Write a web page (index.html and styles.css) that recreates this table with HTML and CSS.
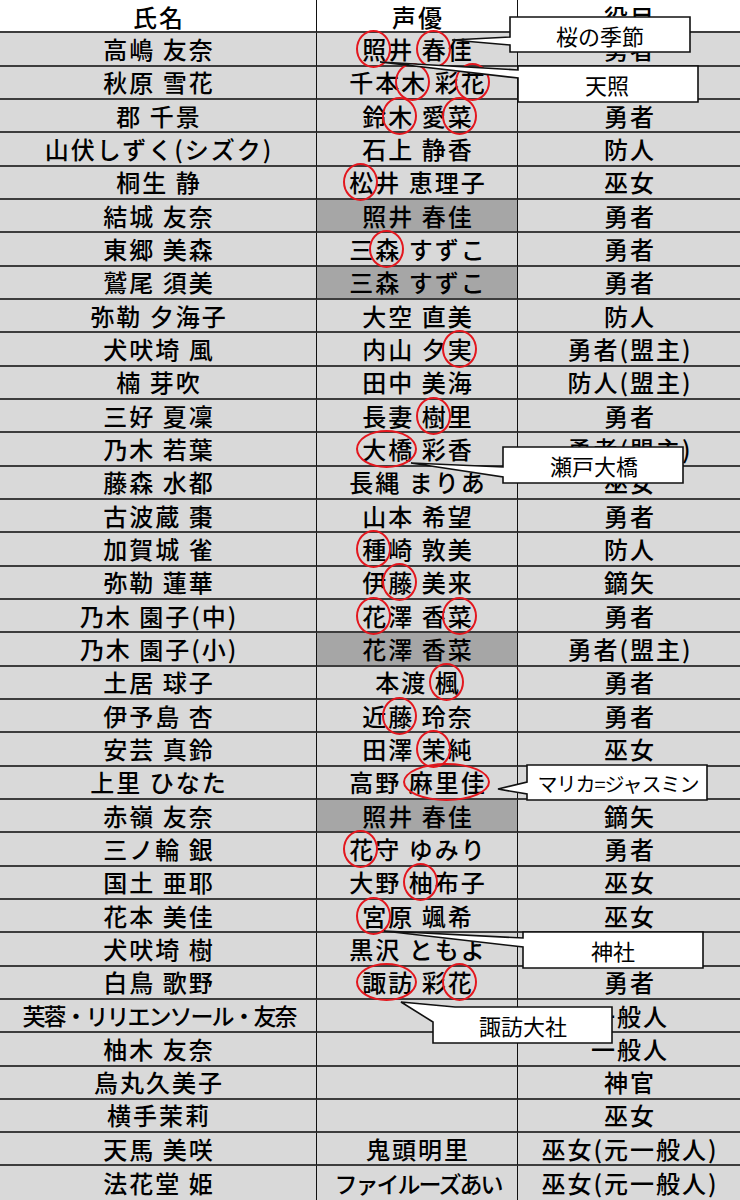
FILE: index.html
```html
<!DOCTYPE html>
<html lang="ja">
<head>
<meta charset="utf-8">
<title>キャスト一覧</title>
<link rel="stylesheet" href="styles.css">
</head>
<body>
<div class="page">
  <div class="sheet">
    <div class="c n hd">氏名</div><div class="c v hd">声優</div><div class="c r hd">役目</div>

    <div class="c n">高嶋 友奈</div><div class="c v"><span class="mk">照</span>井 <span class="mk">春</span>佳</div><div class="c r">勇者</div>
    <div class="c n">秋原 雪花</div><div class="c v">千本<span class="mk">木</span> 彩<span class="mk">花</span></div><div class="c r"></div>
    <div class="c n">郡 千景</div><div class="c v">鈴<span class="mk">木</span> 愛<span class="mk">菜</span></div><div class="c r">勇者</div>
    <div class="c n">山伏しずく(シズク)</div><div class="c v">石上 静香</div><div class="c r">防人</div>
    <div class="c n">桐生 静</div><div class="c v"><span class="mk">松</span>井 恵理子</div><div class="c r">巫女</div>
    <div class="c n">結城 友奈</div><div class="c v dk">照井 春佳</div><div class="c r">勇者</div>
    <div class="c n">東郷 美森</div><div class="c v">三<span class="mk">森</span> すずこ</div><div class="c r">勇者</div>
    <div class="c n">鷲尾 須美</div><div class="c v dk">三森 すずこ</div><div class="c r">勇者</div>
    <div class="c n">弥勒 夕海子</div><div class="c v">大空 直美</div><div class="c r">防人</div>
    <div class="c n">犬吠埼 風</div><div class="c v">内山 夕<span class="mk">実</span></div><div class="c r">勇者(盟主)</div>
    <div class="c n">楠 芽吹</div><div class="c v">田中 美海</div><div class="c r">防人(盟主)</div>
    <div class="c n">三好 夏凜</div><div class="c v">長妻 <span class="mk">樹</span>里</div><div class="c r">勇者</div>
    <div class="c n">乃木 若葉</div><div class="c v"><span class="mk">大橋</span> 彩香</div><div class="c r">勇者(盟主)</div>
    <div class="c n">藤森 水都</div><div class="c v">長縄 まりあ</div><div class="c r">巫女</div>
    <div class="c n">古波蔵 棗</div><div class="c v">山本 希望</div><div class="c r">勇者</div>
    <div class="c n">加賀城 雀</div><div class="c v"><span class="mk">種</span>崎 敦美</div><div class="c r">防人</div>
    <div class="c n">弥勒 蓮華</div><div class="c v">伊<span class="mk">藤</span> 美来</div><div class="c r">鏑矢</div>
    <div class="c n">乃木 園子(中)</div><div class="c v"><span class="mk">花</span>澤 香<span class="mk">菜</span></div><div class="c r">勇者</div>
    <div class="c n">乃木 園子(小)</div><div class="c v dk">花澤 香菜</div><div class="c r">勇者(盟主)</div>
    <div class="c n">土居 球子</div><div class="c v">本渡 <span class="mk">楓</span></div><div class="c r">勇者</div>
    <div class="c n">伊予島 杏</div><div class="c v">近<span class="mk">藤</span> 玲奈</div><div class="c r">勇者</div>
    <div class="c n">安芸 真鈴</div><div class="c v">田澤 <span class="mk">茉</span>純</div><div class="c r">巫女</div>
    <div class="c n">上里 ひなた</div><div class="c v">高野 <span class="mk">麻里佳</span></div><div class="c r"></div>
    <div class="c n">赤嶺 友奈</div><div class="c v dk">照井 春佳</div><div class="c r">鏑矢</div>
    <div class="c n">三ノ輪 銀</div><div class="c v"><span class="mk">花</span>守 ゆみり</div><div class="c r">勇者</div>
    <div class="c n">国土 亜耶</div><div class="c v">大野 <span class="mk">柚</span>布子</div><div class="c r">巫女</div>
    <div class="c n">花本 美佳</div><div class="c v"><span class="mk">宮</span>原 颯希</div><div class="c r">巫女</div>
    <div class="c n">犬吠埼 樹</div><div class="c v">黒沢 ともよ</div><div class="c r"></div>
    <div class="c n">白鳥 歌野</div><div class="c v"><span class="mk">諏訪</span> 彩<span class="mk">花</span></div><div class="c r">勇者</div>
    <div class="c n narrow">芙蓉・リリエンソール・友奈</div><div class="c v"></div><div class="c r">一般人</div>
    <div class="c n">柚木 友奈</div><div class="c v"></div><div class="c r">一般人</div>
    <div class="c n">烏丸久美子</div><div class="c v"></div><div class="c r">神官</div>
    <div class="c n">横手茉莉</div><div class="c v"></div><div class="c r">巫女</div>
    <div class="c n">天馬 美咲</div><div class="c v">鬼頭明里</div><div class="c r">巫女(元一般人)</div>
    <div class="c n last">法花堂 姫</div><div class="c v last narrow">ファイルーズあい</div><div class="c r last">巫女(元一般人)</div>
  </div>

  <svg class="notes" width="740" height="1200" viewBox="0 0 740 1200">
    <g class="call">
      <path d="M452,40 L510,37 L510,17 L690,17 L690,52 L510,52 L510,45 Z"/>
      <text x="600" y="35">桜の季節</text>
    </g>
    <g class="call">
      <path d="M380,62 L518,70 L518,66 L698,66 L698,102 L518,102 L518,78 Z"/>
      <text x="607" y="84">天照</text>
    </g>
    <g class="call">
      <path d="M411,463 L503,467 L503,447 L683,447 L683,483 L503,483 L503,477 Z"/>
      <text x="594" y="465">瀬戸大橋</text>
    </g>
    <g class="call">
      <path d="M498,789 L527,782 L527,765 L707,765 L707,800 L527,800 L527,794 Z"/>
      <text class="long" x="618" y="783">マリカ=ジャスミン</text>
    </g>
    <g class="call">
      <path d="M384,931 L523,938 L523,932 L703,932 L703,968 L523,968 L523,947 Z"/>
      <text x="613" y="950">神社</text>
    </g>
    <g class="call">
      <path d="M401,1002 L455,1007 L612,1007 L612,1043 L433,1043 L433,1022 Z"/>
      <text x="523" y="1025">諏訪大社</text>
    </g>
  </svg>
</div>
</body>
</html>
```

FILE: styles.css
```css
html, body {
  margin: 0;
  padding: 0;
  background: #ffffff;
}

.page {
  position: relative;
  width: 740px;
  height: 1200px;
  overflow: hidden;
}

.sheet {
  display: grid;
  grid-template-columns: 317px 201px 222px;
  grid-auto-rows: 33.333px;
  font-family: "Noto Sans CJK JP", sans-serif;
  font-size: 24px;
  font-weight: 500;
  letter-spacing: 2px;
  color: #000;
}

.c {
  box-sizing: border-box;
  display: flex;
  align-items: center;
  justify-content: center;
  white-space: pre;
  background: #d9d9d9;
  border-bottom: 2px solid #3d3d3d;
  line-height: 1;
  padding-left: 2px;
}

.c.n,
.c.v {
  border-right: 1px solid #111;
}

.c.hd {
  background: #ffffff;
  padding-top: 3px;
}

.c.dk {
  background: #a6a6a6;
}

.c.last {
  border-bottom: none;
}

.c.narrow {
  font-size: 23px;
  letter-spacing: -2px;
}

.mk {
  position: relative;
  display: inline-block;
  line-height: 24px;
}

.mk::after {
  content: "";
  position: absolute;
  left: -6px;
  right: -3px;
  top: -7px;
  bottom: -7px;
  border: 2px solid #e3171e;
  border-radius: 50%;
}

.notes {
  position: absolute;
  left: 0;
  top: 0;
  pointer-events: none;
}

.call path {
  fill: #ffffff;
  stroke: #111;
  stroke-width: 1.6;
  stroke-linejoin: miter;
}

.call text {
  font-family: "Noto Sans CJK JP", sans-serif;
  font-size: 22px;
  fill: #000;
  text-anchor: middle;
  dominant-baseline: central;
}

.call text.long {
  font-size: 20px;
  letter-spacing: -1px;
}
```
